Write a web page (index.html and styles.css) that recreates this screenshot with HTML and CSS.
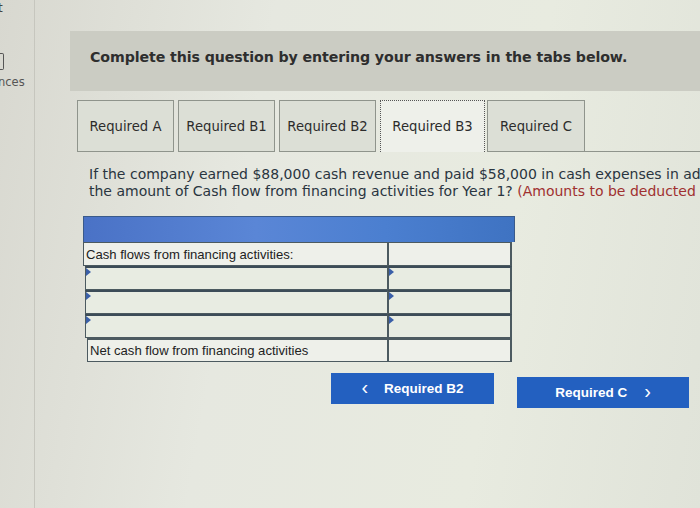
FILE: index.html
```html
<!DOCTYPE html>
<html>
<head>
<meta charset="utf-8">
<link rel="stylesheet" href="styles.css">
</head>
<body>
<div class="screen">
  <aside class="side">
    <div class="side-t">t</div>
    <div class="side-box"></div>
    <div class="side-label">nces</div>
  </aside>
  <main class="main">
    <div class="banner">Complete this question by entering your answers in the tabs below.</div>
    <div class="tabs">
      <div class="tab">Required A</div>
      <div class="tab">Required B1</div>
      <div class="tab">Required B2</div>
      <div class="tab active">Required B3</div>
      <div class="tab last">Required C</div>
      <div class="tab-fill"></div>
    </div>
    <div class="question">
      <p>If the company earned $88,000 cash revenue and paid $58,000 in cash expenses in addition to the above transactions, what is</p>
      <p>the amount of Cash flow from financing activities for Year 1? <span class="red">(Amounts to be deducted should be indicated with a minus sign.)</span></p>
    </div>
    <div class="sheet">
      <div class="sheet-head"></div>
      <div class="row">
        <div class="cell label">Cash flows from financing activities:</div>
        <div class="cell val"></div>
      </div>
      <div class="row input">
        <div class="cell label"><span class="tri"></span></div>
        <div class="cell val"><span class="tri"></span></div>
      </div>
      <div class="row input">
        <div class="cell label"><span class="tri"></span></div>
        <div class="cell val"><span class="tri"></span></div>
      </div>
      <div class="row input">
        <div class="cell label"><span class="tri"></span></div>
        <div class="cell val"><span class="tri"></span></div>
      </div>
      <div class="row">
        <div class="cell label net">Net cash flow from financing activities</div>
        <div class="cell val"></div>
      </div>
    </div>
    <div class="nav">
      <div class="btn prev"><span class="chev">&lsaquo;</span>Required B2</div>
      <div class="btn next">Required C<span class="chev">&rsaquo;</span></div>
    </div>
  </main>
</div>
</body>
</html>
```

FILE: styles.css
```css
html, body {
  margin: 0;
  padding: 0;
}
body {
  width: 700px;
  height: 508px;
  overflow: hidden;
  background: #e2e4dc;
  font-family: "DejaVu Sans", Verdana, sans-serif;
}
.screen {
  display: flex;
  width: 700px;
  height: 508px;
  background: linear-gradient(100deg, #d8d8d0 0%, #e6e8e0 35%, #e8ebe0 70%, #e0e3d9 100%);
}
.side {
  width: 34px;
  flex: none;
  border-right: 1px solid #c6c6be;
  font-family: "DejaVu Sans", sans-serif;
  color: #444;
}
.side-t {
  font-size: 12px;
  line-height: 12px;
  margin-left: -2px;
  margin-top: 2px;
}
.side-box {
  width: 3px;
  height: 15px;
  margin-top: 39px;
  border: 1px solid #555;
  border-left: none;
  border-radius: 0 2px 2px 0;
}
.side-label {
  font-size: 11.5px;
  margin-left: -2px;
  margin-top: 5px;
  color: #555;
}
.main {
  flex: 1;
  padding-left: 35px;
  min-width: 0;
}
.banner {
  margin-top: 31px;
  height: 60px;
  background: #cbccc3;
  padding-left: 20px;
  padding-bottom: 9px;
  box-sizing: border-box;
  display: flex;
  align-items: center;
  font-weight: bold;
  font-size: 14.2px;
  color: #2e2e2e;
  letter-spacing: -0.1px;
}
.tabs {
  display: flex;
  margin-top: 9px;
  margin-left: 7px;
  height: 52px;
  align-items: stretch;
  gap: 4px;
}
.tab {
  width: 97px;
  box-sizing: border-box;
  border: 1px solid #8f948c;
  background: #dcdfd6;
  display: flex;
  align-items: center;
  justify-content: center;
  font-size: 13.2px;
  color: #2c2c2c;
}
.tab.active {
  width: 105px;
  background: #eef0ea;
  border: 1px dotted #555;
  border-bottom: none;
}
.tab.last {
  margin-left: -2px;
  width: 98px;
}
.tab-fill {
  flex: 1;
  border-bottom: 1px solid #8f948c;
  margin-left: -4px;
}
.question {
  padding: 14px 0 0 19px;
  white-space: nowrap;
  overflow: hidden;
  font-size: 14px;
  color: #2a3540;
  line-height: 17px;
  height: 50px;
  box-sizing: border-box;
}
.question p {
  margin: 0;
}
.red {
  color: #a03030;
}
.sheet {
  margin-left: 13px;
  margin-top: 14px;
  width: 432px;
  font-family: "Liberation Sans", Arial, sans-serif;
  font-size: 13.1px;
  color: #222;
}
.sheet-head {
  height: 25px;
  background: linear-gradient(90deg, #4a72c6 0%, #5a86d6 40%, #4b7fd0 70%, #3f73c2 100%);
  border: 1px solid #3a5a8a;
  border-bottom: none;
}
.row {
  display: flex;
  height: 24px;
}
.cell {
  box-sizing: border-box;
  border: 1px solid #4c5a60;
  position: relative;
}
.cell.label {
  width: 304px;
  border-right: none;
  padding-left: 2px;
  display: flex;
  align-items: center;
  background: #eef0ea;
}
.cell.val {
  flex: 1;
  margin-right: 3px;
  background: #eef0ea;
  border-width: 1px 2px 1px 2px;
}
.row.input .cell {
  border-top: 2px solid #3c4c58;
  background: #e8ece2;
}
.row.input .cell.label {
  margin-left: 2px;
  width: 302px;
}
.cell.net {
  margin-left: 4px;
  width: 300px;
}
.row + .row .cell {
  border-top-width: 2px;
}
.tri {
  position: absolute;
  left: 0;
  top: 0;
  width: 0;
  height: 0;
  border-top: 4px solid transparent;
  border-bottom: 4px solid transparent;
  border-left: 5px solid #3a5fa8;
}
.nav {
  display: flex;
  margin-top: 11px;
  margin-left: 261px;
  gap: 23px;
  align-items: flex-start;
}
.btn {
  background: #2360c0;
  color: #ffffff;
  font-family: "Liberation Sans", Arial, sans-serif;
  font-weight: bold;
  font-size: 13.5px;
  height: 31px;
  display: flex;
  align-items: center;
  justify-content: center;
  box-sizing: border-box;
}
.btn.prev {
  width: 163px;
}
.btn.next {
  width: 172px;
  margin-top: 4px;
}
.chev {
  font-size: 20px;
  font-weight: normal;
  line-height: 1;
  margin-top: -3px;
}
.prev .chev {
  margin-right: 16px;
}
.next .chev {
  margin-left: 17px;
}
```
